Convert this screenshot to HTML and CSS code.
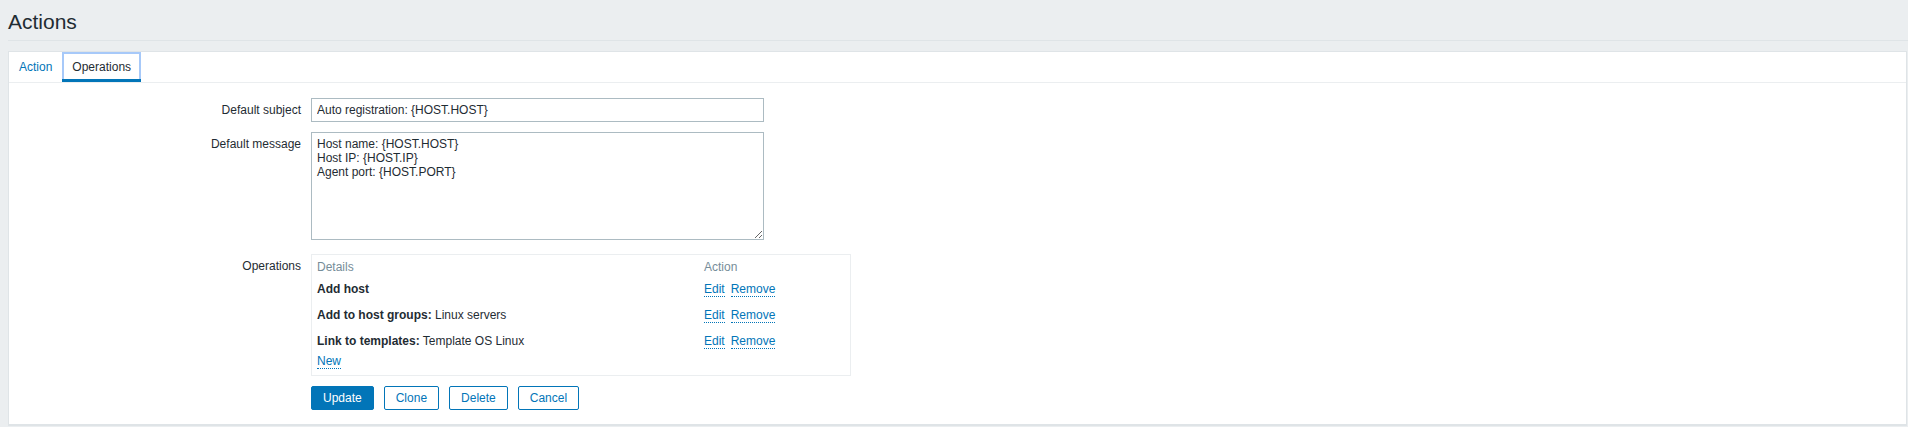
FILE: index.html
```html
<!DOCTYPE html>
<html lang="en">
<head>
<meta charset="utf-8">
<title>Actions</title>
<link rel="stylesheet" href="styles.css">
</head>
<body>
<div class="page">
  <header class="page-header">
    <h1 class="page-title">Actions</h1>
  </header>
  <main class="form-container">
    <ul class="tabs">
      <li class="tab"><a class="tab-link" href="#">Action</a></li>
      <li class="tab tab-active"><a class="tab-link" href="#">Operations</a></li>
    </ul>
    <div class="form-grid">
      <label class="form-label" for="subject">Default subject</label>
      <div class="form-field">
        <input class="text-input" id="subject" type="text" value="Auto registration: {HOST.HOST}">
      </div>

      <label class="form-label" for="message">Default message</label>
      <div class="form-field">
        <textarea class="text-area" id="message">Host name: {HOST.HOST}
Host IP: {HOST.IP}
Agent port: {HOST.PORT}</textarea>
      </div>

      <div class="form-label">Operations</div>
      <div class="form-field">
        <div class="ops-box">
          <div class="ops-table">
            <div class="ops-head">Details</div>
            <div class="ops-head">Action</div>

            <div class="ops-cell"><b>Add host</b></div>
            <div class="ops-cell"><a class="link-action" href="#">Edit</a><a class="link-action" href="#">Remove</a></div>

            <div class="ops-cell"><b>Add to host groups:</b> Linux servers</div>
            <div class="ops-cell"><a class="link-action" href="#">Edit</a><a class="link-action" href="#">Remove</a></div>

            <div class="ops-cell"><b>Link to templates:</b> Template OS Linux</div>
            <div class="ops-cell"><a class="link-action" href="#">Edit</a><a class="link-action" href="#">Remove</a></div>

            <div class="ops-new"><a class="link-action" href="#">New</a></div>
          </div>
        </div>
      </div>

      <div class="form-label"></div>
      <div class="form-field buttons">
        <button class="btn btn-primary" type="button">Update</button>
        <button class="btn btn-alt" type="button">Clone</button>
        <button class="btn btn-alt" type="button">Delete</button>
        <button class="btn btn-alt" type="button">Cancel</button>
      </div>
    </div>
  </main>
</div>
</body>
</html>
```

FILE: styles.css
```css
html, body {
  margin: 0;
  padding: 0;
  background: #ebeef0;
}

body {
  font-family: "Liberation Sans", Arial, sans-serif;
  font-size: 12px;
  line-height: 14px;
  color: #1f2c33;
  height: 427px;
  overflow: hidden;
}

.page {
  margin-left: 8px;
}

.page-header {
  box-sizing: border-box;
  height: 41px;
  padding-top: 10px;
  border-bottom: 1px solid #dfe4e7;
  margin-bottom: 10px;
}

.page-title {
  margin: 0;
  font-size: 21px;
  line-height: 24px;
  font-weight: normal;
  color: #1f2c33;
}

.form-container {
  display: block;
  margin-right: 1px;
  background: #fff;
  border: 1px solid #dfe4e7;
  border-bottom-width: 2px;
}

.tabs {
  display: flex;
  list-style: none;
  margin: 0;
  padding: 0;
  border-bottom: 1px solid #ebeef0;
}

.tab-link {
  display: block;
  padding: 8px 10px 5px;
  line-height: 14px;
  border-bottom: 3px solid transparent;
  color: #0275b8;
  text-decoration: none;
}

.tab-active .tab-link {
  color: #1f2c33;
  border-bottom-color: #0275b8;
  box-shadow: inset 2px 2px 0 #a7c9f9, inset -2px 0 0 #a7c9f9;
}

.form-grid {
  display: grid;
  grid-template-columns: 292px 1fr;
  column-gap: 10px;
  row-gap: 10px;
  padding: 15px 0 14px;
}

.form-label {
  text-align: right;
  line-height: 24px;
}

.form-field {
  min-width: 0;
}

.text-input {
  display: block;
  box-sizing: border-box;
  width: 453px;
  height: 24px;
  margin: 0;
  padding: 0 5px;
  border: 1px solid #acbbc2;
  border-radius: 0;
  font-family: "Liberation Sans", Arial, sans-serif;
  font-size: 12px;
  color: #1f2c33;
  background: #fff;
  outline: none;
}

.text-area {
  display: block;
  box-sizing: border-box;
  width: 453px;
  height: 108px;
  margin: 0 0 4px;
  padding: 4px 5px;
  border: 1px solid #acbbc2;
  border-radius: 0;
  font-family: "Liberation Sans", Arial, sans-serif;
  font-size: 12px;
  line-height: 14px;
  color: #1f2c33;
  background: #fff;
  outline: none;
}

.ops-box {
  box-sizing: border-box;
  width: 540px;
  padding: 5px;
  border: 1px solid #ebeef0;
}

.ops-table {
  display: grid;
  grid-template-columns: 387px 1fr;
}

.ops-head {
  color: #768d99;
  line-height: 14px;
  padding-bottom: 2px;
}

.ops-cell {
  padding: 6px 0;
  line-height: 14px;
}

.ops-cell b {
  font-weight: bold;
}

.ops-new {
  grid-column: 1 / -1;
  height: 16px;
  line-height: 14px;
}

.link-action {
  color: #0275b8;
  text-decoration: none;
  border-bottom: 1px dotted #0275b8;
}

.link-action + .link-action {
  margin-left: 6px;
}

.buttons {
  display: flex;
  gap: 10px;
}

.btn {
  box-sizing: border-box;
  height: 24px;
  margin: 0;
  padding: 0 11px;
  border: 1px solid #0275b8;
  border-radius: 2px;
  font-family: "Liberation Sans", Arial, sans-serif;
  font-size: 12px;
  line-height: 22px;
  cursor: pointer;
}

.btn-primary {
  background: #0275b8;
  color: #fff;
}

.btn-alt {
  background: #fff;
  color: #0275b8;
}
```
